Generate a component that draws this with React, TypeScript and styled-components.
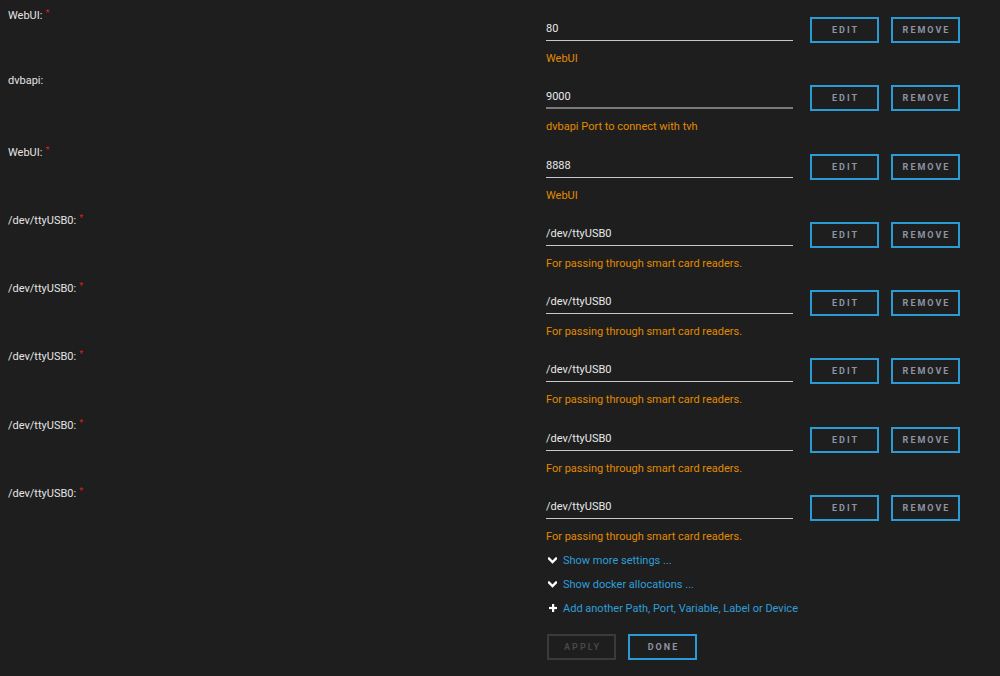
import React from "react";
import styled, { createGlobalStyle } from "styled-components";

const GlobalStyle = createGlobalStyle`
  html, body { margin: 0; padding: 0; }
  body {
    background: #1e1e1e;
    font-family: Roboto, "Open Sans", sans-serif;
    font-size: 11px;
    color: #e4e4e4;
  }
`;

const Page = styled.div`
  width: 1000px;
  height: 676px;
  overflow: hidden;
`;

const Row = styled.div`
  display: grid;
  grid-template-columns: 546px 1fr;
  height: 68.25px;
`;

const Label = styled.div`
  padding: 5px 0 0 8px;
  line-height: 16px;
  color: #e4e4e4;
`;

const Req = styled.span`
  color: #d42020;
  font-size: 9px;
  vertical-align: 3px;
  margin-left: 3px;
`;

const Field = styled.div`
  padding-top: 17px;
`;

const Controls = styled.div`
  display: flex;
  align-items: flex-start;
`;

const Value = styled.div<{ $dim?: boolean }>`
  box-sizing: border-box;
  width: 247px;
  height: 24px;
  padding-top: 1px;
  line-height: 22px;
  border-bottom: ${(p) => (p.$dim ? "2px solid #7a7a7a" : "1px solid #c8c8c8")};
  color: #e8e8e8;
`;

const Buttons = styled.div`
  display: flex;
  gap: 12px;
  margin-left: 17px;
`;

const Button = styled.button<{ $disabled?: boolean }>`
  box-sizing: border-box;
  width: 69px;
  height: 26px;
  padding: 0 0 0 2px;
  background: transparent;
  border: 2px solid ${(p) => (p.$disabled ? "#3a3a3a" : "#2b9bd6")};
  color: ${(p) => (p.$disabled ? "#474747" : "#8d94a3")};
  font-family: Roboto, "Open Sans", sans-serif;
  font-weight: 700;
  font-size: 9px;
  letter-spacing: 2px;
  text-transform: uppercase;
  cursor: pointer;
`;

const Desc = styled.div`
  margin-top: 8px;
  line-height: 16px;
  color: #e08a00;
`;

const Footer = styled.div`
  padding: 2px 0 0 546px;
`;

const LinkLine = styled.div`
  display: flex;
  align-items: center;
  height: 24px;
  color: #2e9fdb;
`;

const IconBox = styled.span`
  width: 9px;
  margin: 0 6px 0 2px;
  display: flex;
  justify-content: flex-end;
  align-items: center;
`;

const Actions = styled.div`
  display: flex;
  gap: 12px;
  margin: 14px 0 0 1px;
`;

const Chevron = () => (
  <svg width="9" height="7" viewBox="0 0 9 7">
    <polyline points="1,1.5 4.5,5 8,1.5" fill="none" stroke="#ffffff" strokeWidth="2.3" strokeLinecap="square" />
  </svg>
);

const Plus = () => (
  <svg width="8" height="8" viewBox="0 0 8 8">
    <rect x="3" y="0" width="2.2" height="8" fill="#ffffff" />
    <rect x="0" y="2.9" width="8" height="2.2" fill="#ffffff" />
  </svg>
);

type Item = { label: string; req: boolean; value: string; desc: string; dim?: boolean };

const items: Item[] = [
  { label: "WebUI:", req: true, value: "80", desc: "WebUI" },
  { label: "dvbapi:", req: false, value: "9000", desc: "dvbapi Port to connect with tvh", dim: true },
  { label: "WebUI:", req: true, value: "8888", desc: "WebUI" },
  ...Array.from({ length: 5 }, () => ({
    label: "/dev/ttyUSB0:",
    req: true,
    value: "/dev/ttyUSB0",
    desc: "For passing through smart card readers.",
  })),
];

export default function App() {
  return (
    <Page>
      <GlobalStyle />
      {items.map((it, i) => (
        <Row key={i}>
          <Label>
            {it.label}
            {it.req && <Req>*</Req>}
          </Label>
          <Field>
            <Controls>
              <Value $dim={it.dim}>{it.value}</Value>
              <Buttons>
                <Button>Edit</Button>
                <Button>Remove</Button>
              </Buttons>
            </Controls>
            <Desc>{it.desc}</Desc>
          </Field>
        </Row>
      ))}
      <Footer>
        <LinkLine>
          <IconBox><Chevron /></IconBox>Show more settings ...
        </LinkLine>
        <LinkLine>
          <IconBox><Chevron /></IconBox>Show docker allocations ...
        </LinkLine>
        <LinkLine>
          <IconBox><Plus /></IconBox>Add another Path, Port, Variable, Label or Device
        </LinkLine>
        <Actions>
          <Button $disabled>Apply</Button>
          <Button>Done</Button>
        </Actions>
      </Footer>
    </Page>
  );
}
